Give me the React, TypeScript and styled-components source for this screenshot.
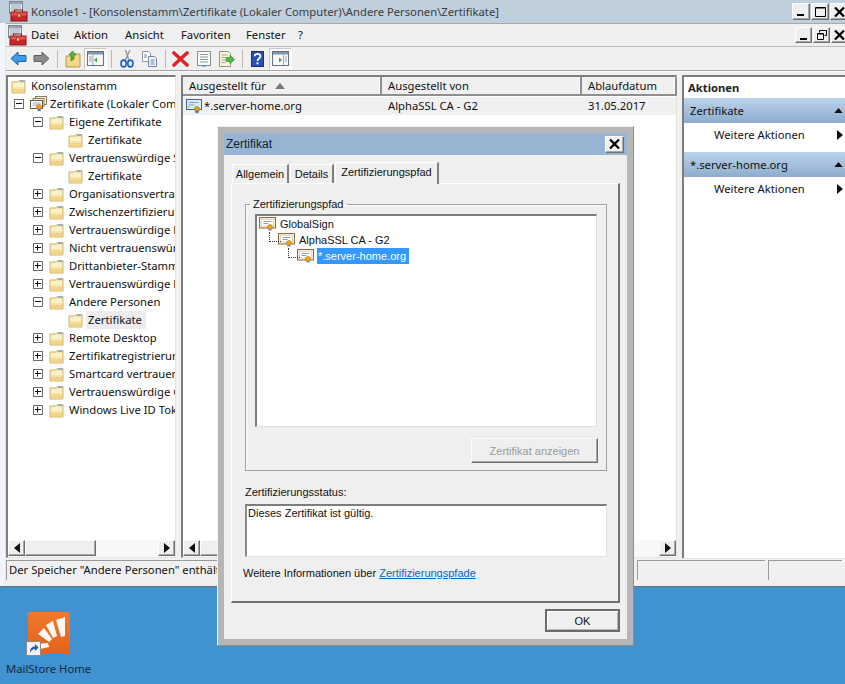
import React from "react";
import styled, { createGlobalStyle, css } from "styled-components";

const Global = createGlobalStyle`
  html, body { margin: 0; padding: 0; background: #4092d0; }
  * { box-sizing: border-box; }
  body { font-family: "Noto Sans", "DejaVu Sans", sans-serif; font-size: 11.25px; line-height: 14px; color: #111; }
`;

const raised = css`
  border: 1px solid;
  border-color: #fdfdfd #6f6f6f #6f6f6f #fdfdfd;
  box-shadow: inset -1px -1px 0 #a8a8a8;
  background: #efefef;
`;
const sunken = css`
  border: 1px solid;
  border-color: #7d7d7d #e4e4e4 #e4e4e4 #7d7d7d;
  border-top-width: 2px;
  border-left-width: 2px;
`;

const Page = styled.div`
  position: relative; width: 845px; height: 684px; overflow: hidden;
  display: flex; flex-direction: column; background: #4092d0;
`;
const Window = styled.div`
  height: 587px; flex: none; display: flex; flex-direction: column;
  background: #f1f5fa; border-bottom: 1px solid #6c6c6c;
`;
const TitleBar = styled.div`
  height: 23px; flex: none; display: flex; align-items: center; padding-left: 8px; gap: 2px;
  background: #bfcfdc; color: #3c3c3c;
`;
const TitleText = styled.span` flex: 1; white-space: nowrap; padding-top: 1px; `;
const CaptionGroup = styled.div` display: flex; gap: 1px; align-items: center; margin-right: -3px; `;
const CaptionBtn = styled.div<{ $w?: number; $h?: number }>`
  ${raised};
  width: ${p => p.$w ?? 18}px; height: ${p => p.$h ?? 17}px;
  display: flex; align-items: center; justify-content: center;
`;
const MdiArea = styled.div`
  flex: 1; display: flex; flex-direction: column; min-height: 0;
  border-top: 1px solid #a9a9a9; margin-left: 6px; background: #f0f0f0;
  box-shadow: -1px 0 0 #e6e6e6;
`;
const MenuBar = styled.div`
  height: 23px; flex: none; display: flex; align-items: center; padding-left: 1px;
  background: #f0f0f0; border-bottom: 1px solid #bdbdbd;
`;
const Menus = styled.div` flex: 1; display: flex; align-items: center; margin-left: 3px; `;
const MenuItem = styled.span<{ $w: number }>` width: ${p => p.$w}px; `;
const ToolBar = styled.div`
  height: 24px; flex: none; display: flex; align-items: center; padding-left: 1px;
  background: #f0f0f0; border-bottom: 1px solid #a5a5a5; box-shadow: 0 1px 0 #fafafa;
`;
const ToolBtn = styled.div<{ $on?: boolean }>`
  width: 23px; height: 22px; display: flex; align-items: center; justify-content: center;
  ${p => p.$on && css`border: 1px solid; border-color: #c9c9c9 #fff #fff #c9c9c9; background: #f7f7f7;`}
`;
const ToolSep = styled.div`
  width: 8px; height: 18px; display: flex; justify-content: center;
  &::after { content: ""; width: 1px; height: 100%; background: #b9b9b9; }
`;
const Panes = styled.div`
  flex: none; height: 483px; margin-top: 4px; display: flex; background: #f0f0f0;
`;
const TreePane = styled.div`
  width: 170px; flex: none; display: flex; flex-direction: column; background: #fff; overflow: hidden;
  ${sunken}; border-right: 1px solid #e4e4e4;
`;
const TreeBody = styled.div` flex: 1; overflow: hidden; `;
const Row = styled.div<{ $x: number }>`
  height: 18px; display: flex; align-items: center; padding-left: ${p => p.$x}px; white-space: nowrap;
`;
const Expander = styled.span`
  width: 10px; height: 10px; flex: none; margin-right: 6px; border: 1px solid #6d6d6d; background: #fff;
  display: flex; align-items: center; justify-content: center;
  svg { display: block; }
`;
const RowIcon = styled.span`
  width: 20px; flex: none; display: flex; align-items: center;
`;
const CurrentLabel = styled.span` background: #ececec; padding: 2px 4px 2px 2px; margin-left: -2px; `;
const ScrollBar = styled.div`
  height: 17px; flex: none; display: flex; align-items: stretch;
  background: repeating-conic-gradient(#f2f2f2 0 25%, #fff 0 50%) 0 0 / 2px 2px;
  padding-bottom: 1px;
`;
const ScrollBtn = styled.div`
  ${raised}; width: 17px; flex: none; display: flex; align-items: center; justify-content: center;
`;
const Thumb = styled.div<{ $w: number }>` ${raised}; width: ${p => p.$w}px; flex: none; `;
const Track = styled.div` flex: 1; `;
const ListPane = styled.div`
  width: 496px; flex: none; margin-left: 5px; display: flex; flex-direction: column; background: #fff;
  ${sunken}; border-right: 1px solid #e4e4e4;
`;
const ListHeader = styled.div` height: 19px; flex: none; display: flex; background: #f0f0f0; `;
const HeaderCell = styled.div<{ $w: number }>`
  width: ${p => p.$w}px; flex: none; display: flex; align-items: center; gap: 9px; padding-left: 6px;
  border-bottom: 2px solid #8f8f8f; border-right: 2px solid #8f8f8f; box-shadow: inset -1px 0 0 #fff;
  white-space: nowrap;
`;
const ListRow = styled.div` height: 18px; flex: none; margin-top: 1px; display: flex; align-items: center; background: #f0f0f0; `;
const ListCell = styled.div<{ $w: number }>`
  width: ${p => p.$w}px; flex: none; display: flex; align-items: center; padding-left: 6px; white-space: nowrap;
`;
const ListFirst = styled(ListCell)` padding-left: 3px; gap: 1px; `;
const ListBody = styled.div` flex: 1; `;
const ActionPane = styled.div`
  flex: 1; margin-left: 5px; background: #fff; display: flex; flex-direction: column;
  border-left: 2px solid #7d7d7d; border-top: 2px solid #7d7d7d;
  box-shadow: 0 1px 0 #e4e4e4;
`;
const ActionHead = styled.div` height: 21px; flex: none; display: flex; align-items: center; padding-left: 4px; font-weight: bold; color: #222; `;
const ActionBand = styled.div`
  height: 25px; flex: none; display: flex; align-items: center; justify-content: space-between; padding: 0 2px 0 6px;
  background: linear-gradient(#bcd3ea, #8dacce);
`;
const ActionLine = styled.div`
  height: 24px; flex: none; display: flex; align-items: center; justify-content: space-between; padding: 0 2px 0 30px;
  margin-bottom: 5px;
`;
const StatusBar = styled.div`
  height: 20px; margin-top: 2px; flex: none; display: flex; background: #f0f0f0;
`;
const StatusCell = styled.div<{ $w?: number }>`
  ${p => (p.$w ? `width: ${p.$w}px; flex: none;` : "flex: 1;")}
  border-top: 1px solid #9a9a9a; border-left: 1px solid #9a9a9a; margin-right: 3px; padding: 2px 0 0 2px;
  white-space: nowrap; overflow: hidden;
`;
const Desktop = styled.div` flex: 1; padding: 25px 0 0 6px; `;
const Shortcut = styled.div` position: relative; width: 86px; display: flex; flex-direction: column; `;
const ShortcutIcon = styled.div` width: 42px; height: 42px; margin-left: 22px; `;
const Arrow = styled.div`
  position: absolute; left: 20px; top: 29px; width: 15px; height: 15px; background: #f4f4f4; border: 1px solid #8a8a8a;
  display: flex; align-items: center; justify-content: center;
`;
const ShortcutLabel = styled.div` margin-top: 8px; white-space: nowrap; color: #14283c; `;

const Dialog = styled.div`
  position: absolute; left: 217px; top: 126px; width: 417px; height: 520px; padding: 6px;
  background: #b6b6b6; border-top: 1px solid #f2f2f2; border-left: 1px solid #f2f2f2; border-bottom: 1px solid #8e8e8e; border-right: 1px solid #8e8e8e;
  display: flex; flex-direction: column; font-family: "Liberation Sans", Arial, sans-serif; font-size: 11px;
`;
const DialogBody = styled.div` flex: 1; background: #efefef; display: flex; flex-direction: column; `;
const DialogTitle = styled.div`
  height: 22px; flex: none; background: #98b4d3; display: flex; align-items: center; justify-content: space-between;
  padding: 0 3px 0 2px; color: #14202c; font-size: 12px;
`;
const DialogClose = styled(CaptionBtn)` width: 19px; height: 17px; `;
const Tabs = styled.div` display: flex; align-items: flex-end; height: 21px; margin: 7px 0 0 8px; position: relative; z-index: 1; `;
const Tab = styled.div<{ $active?: boolean; $w: number }>`
  width: ${p => p.$w}px; display: flex; align-items: center; justify-content: center;
  height: ${p => (p.$active ? 22 : 19)}px; margin-right: 1px;
  border-top: 1px solid #fff; border-left: 1px solid #fff; border-right: 2px solid #7f7f7f; background: #efefef;
  ${p => p.$active && css`margin-bottom: -1px; padding-bottom: 3px;`}
`;
const TabPanel = styled.div`
  height: 420px; flex: none; margin: 0 7px; padding: 0 13px;
  border-top: 1px solid #fff; border-left: 1px solid #fff; border-right: 2px solid #6f6f6f; border-bottom: 2px solid #6f6f6f;
  display: flex; flex-direction: column;
`;
const Group = styled.fieldset`
  margin: 13px 0 0; padding: 3px 9px 6px; border: 1px solid #a0a0a0; width: 362px;
  box-shadow: inset 1px 1px 0 #fff; display: flex; flex-direction: column; height: 274px;
`;
const GroupTitle = styled.legend` padding: 0 3px; margin-left: -5px; line-height: 14px; `;
const PathTree = styled.div`
  height: 213px; flex: none; background: #fff;
  ${sunken}; border-bottom-color: #e0e0e0; border-right-color: #e0e0e0;
`;
const PathRow = styled.div<{ $level: number }>`
  height: 16px; display: flex; align-items: center; gap: 3px; position: relative; white-space: nowrap;
  padding-left: ${p => 2 + p.$level * 19}px;
  ${p => p.$level > 0 && css`
    &::before {
      content: ""; position: absolute; left: ${-7 + p.$level * 19}px; top: 0; width: 11px; height: 9px;
      border-left: 1px dotted #333; border-bottom: 1px dotted #333;
    }
  `}
`;
const Selected = styled.span` background: #3399ff; color: #fff; padding: 1px 3px 1px 1px; margin-left: -1px; `;
const DisabledBtn = styled.div`
  ${raised}; align-self: flex-end; width: 127px; height: 25px; margin-top: 11px; color: #9a9a9a; margin-right: -1px;
  display: flex; align-items: center; justify-content: center;
`;
const StatusLabel = styled.div` margin-top: 14px; height: 14px; `;
const StatusBox = styled.div`
  margin-top: 5px; width: 362px; height: 53px; background: #fff; padding: 0 0 0 1px;
  border-top: 2px solid #7d7d7d; border-left: 2px solid #8a8a8a; border-right: 1px solid #e4e4e4; border-bottom: 1px solid #e4e4e4;
`;
const MoreInfo = styled.div` margin: 9px 0 0 -2px; height: 14px; `;
const Link = styled.a` color: #0066cc; text-decoration: underline; `;
const DialogFooter = styled.div` display: flex; justify-content: flex-end; padding: 6px 7px 0 0; `;
const OkButton = styled.div`
  width: 75px; height: 23px; background: #efefef; display: flex; align-items: center; justify-content: center;
  border: 2px solid #6c6c6c; box-shadow: inset 1px 1px 0 #fff, inset -1px -1px 0 #b5b5b5;
`;

const Toolbox = () => (
  <svg width="21" height="21" viewBox="0 0 21 21">
    <rect x="1.5" y="0.5" width="13" height="12" fill="#e9edf2" stroke="#7b8794" />
    <rect x="2" y="1" width="12" height="2.5" fill="#8ea6bf" />
    <path d="M3 5h10M3 7h10M3 9h7" stroke="#9aa4ae" />
    <rect x="6.5" y="9" width="8" height="3" fill="none" stroke="#7a1a1a" />
    <rect x="3" y="11" width="16" height="9" fill="#c9262c" stroke="#7e1418" />
    <rect x="3.5" y="11.5" width="15" height="3" fill="#e6504f" />
    <rect x="9.5" y="13" width="3" height="3" fill="#f0d36a" stroke="#7e1418" strokeWidth=".5" />
  </svg>
);
const Folder = () => (
  <svg width="15" height="15" viewBox="0 0 15 15">
    <path d="M1 3V14H14V1.5H8L6.8 3Z" fill="#f8e3a6" stroke="#d3b56c" />
    <path d="M2 4H13V8H2Z" fill="#fcf1cd" />
    <path d="M9 1.6H13.6V3H9Z" fill="#7fb2de" />
    <path d="M2 10H13V13.5H2Z" fill="#f2d58a" />
  </svg>
);
const StoreIcon = () => (
  <svg width="17" height="16" viewBox="0 0 17 16">
    <rect x="5.5" y=".5" width="11" height="8" fill="#f5efdd" stroke="#8b7d5c" />
    <rect x="3" y="2.5" width="11" height="8" fill="#f7f2e4" stroke="#8b7d5c" />
    <rect x=".5" y="4.5" width="12" height="8" fill="#fff" stroke="#6b5f45" />
    <path d="M2.5 7h8M2.5 9h5" stroke="#9aa7b5" />
    <circle cx="9" cy="11" r="2.6" fill="#e8a21c" stroke="#b4750d" strokeWidth=".6" />
    <path d="M7.5 13v2.5L9 14.5l1.5 1V13" fill="#2e6fc0" />
  </svg>
);
const ListCert = () => (
  <svg width="17" height="16" viewBox="0 0 17 16">
    <rect x=".5" y="1.5" width="15" height="10" fill="#dcecf6" stroke="#46668a" />
    <path d="M2.5 4.5h10M2.5 7h6" stroke="#7fa6c5" />
    <circle cx="2.5" cy="9" r="1" fill="#d6c24a" />
    <circle cx="11" cy="11" r="2.6" fill="#c8a431" stroke="#8f7416" strokeWidth=".5" />
    <path d="M9.5 13v2.6L11 14.6l1.5 1V13" fill="#2e6fc0" />
  </svg>
);
const Cert = () => (
  <svg width="18" height="14" viewBox="0 0 18 14">
    <rect x=".5" y=".5" width="16" height="10.5" fill="#f4ead6" stroke="#8a6a3c" />
    <rect x="2.5" y="2.5" width="12" height="6.5" fill="#fff" stroke="#d9c9aa" strokeWidth=".6" />
    <path d="M4.5 4.5h8M4.5 6.5h5" stroke="#8ba0b8" />
    <circle cx="11" cy="10" r="2.5" fill="#eea41a" stroke="#b9760b" strokeWidth=".6" />
    <path d="M9.6 12v2l1.4-1 1.4 1v-2" fill="#4a86c8" />
  </svg>
);
const Plus = () => (
  <svg width="8" height="8" viewBox="0 0 8 8"><path d="M1 3.5h6M3.5 1v5.5" stroke="#111" /></svg>
);
const Minus = () => (
  <svg width="8" height="8" viewBox="0 0 8 8"><path d="M1 3.5h6" stroke="#111" /></svg>
);
const Tri = ({ dir, size = 5, color = "#111" }: { dir: "l" | "r" | "u"; size?: number; color?: string }) => {
  const p = dir === "l" ? "6,0 6,10 0,5" : dir === "r" ? "0,0 0,10 6,5" : "0,6 10,6 5,0";
  const w = dir === "u" ? 10 : 6;
  const h = dir === "u" ? 6 : 10;
  return (
    <svg width={(w * size) / 5} height={(h * size) / 5} viewBox={`0 0 ${w} ${h}`}>
      <polygon points={p} fill={color} />
    </svg>
  );
};
const Arrowhead = ({ left, fill, stroke }: { left?: boolean; fill: string; stroke: string }) => (
  <svg width="17" height="15" viewBox="0 0 17 15">
    <path d={left ? "M1 7.5L8 1V4.5H16V10.5H8V14Z" : "M16 7.5L9 1V4.5H1V10.5H9V14Z"} fill={fill} stroke={stroke} />
  </svg>
);
const UpFolder = () => (
  <svg width="16" height="18" viewBox="0 0 16 18">
    <path d="M1 6V17H15V4H8L6.5 6Z" fill="#f3d888" stroke="#b99a4d" />
    <path d="M6 11V5H3.8L7.5 1l3.7 4H9v4z" fill="#5bb13a" stroke="#2f7f1d" strokeWidth=".7" />
  </svg>
);
const PaneIcon = ({ right }: { right?: boolean }) => (
  <svg width="17" height="15" viewBox="0 0 17 15">
    <rect x=".5" y=".5" width="16" height="14" fill="#f7f7f7" stroke="#66727e" />
    <rect x="1" y="1" width="15" height="2.5" fill="#7d95ad" />
    <path d={right ? "M11.5 4v10" : "M6 4v10"} stroke="#9aa4ae" />
    <polygon points={right ? "7,6.5 7,11.5 10,9" : "10,6.5 10,11.5 7,9"} fill="#3ea74a" />
    <path d={right ? "M13 6h2M13 8h2M13 10h2" : "M2 6h3M2 8h3M2 10h3"} stroke="#9aa4ae" />
  </svg>
);
const Cut = () => (
  <svg width="14" height="19" viewBox="0 0 14 19">
    <path d="M10 1L5 12M5.5 1L9 12" stroke="#8a96a3" strokeWidth="1.3" />
    <ellipse cx="3.6" cy="14.5" rx="2.6" ry="3.4" fill="none" stroke="#1e62c8" strokeWidth="1.6" />
    <ellipse cx="10.4" cy="14.5" rx="2.6" ry="3.4" fill="none" stroke="#1e62c8" strokeWidth="1.6" />
  </svg>
);
const Copy = () => (
  <svg width="17" height="16" viewBox="0 0 17 16">
    <path d="M1.5.5h6l2 2v8h-8z" fill="#fff" stroke="#8c97a3" />
    <path d="M7.5 5.5h6l2 2v8h-8z" fill="#eef3fa" stroke="#6f88a8" />
    <path d="M9.5 9h4M9.5 11h4M9.5 13h4M3 4h3M3 6h3" stroke="#6f88a8" />
  </svg>
);
const DeleteX = () => (
  <svg width="17" height="16" viewBox="0 0 17 16">
    <path d="M2 2L15 14M15 2L2 14" stroke="#d8262a" strokeWidth="3.6" strokeLinecap="round" />
  </svg>
);
const Props = () => (
  <svg width="16" height="16" viewBox="0 0 16 16">
    <rect x="1.5" y=".5" width="13" height="14" fill="#fbfbf6" stroke="#8a8f94" />
    <path d="M4 3.5h8M4 6h8M4 8.5h8M4 11h8" stroke="#8c9aa8" />
    <rect x="6" y="14" width="4" height="1.6" fill="#3aa0e0" />
  </svg>
);
const ExportI = () => (
  <svg width="17" height="16" viewBox="0 0 17 16">
    <path d="M1.5.5h9l2 2v13h-11z" fill="#fbf4d8" stroke="#9b9474" />
    <path d="M3.5 4h6M3.5 6.5h4M3.5 9h4M3.5 11.5h4" stroke="#9aa" />
    <path d="M8 6.5h4V4l4.5 4.5L12 13v-2.5H8z" fill="#54b948" stroke="#2f8a2c" strokeWidth=".6" />
  </svg>
);
const Help = () => (
  <svg width="13" height="16" viewBox="0 0 13 16">
    <rect width="13" height="16" fill="#2c4fb0" />
    <rect x=".5" y=".5" width="12" height="15" fill="none" stroke="#1b2f7c" />
    <path d="M3.6 5.2C3.8 2.2 9.4 2 9.4 5.2 9.4 7.6 6.5 7.5 6.5 10" fill="none" stroke="#fff" strokeWidth="1.8" />
    <rect x="5.5" y="11.3" width="2" height="2" fill="#fff" />
  </svg>
);
const MailStore = () => (
  <svg width="42" height="42" viewBox="0 0 42 42">
    <defs>
      <linearGradient id="ms" x1="0" y1="0" x2="0" y2="1">
        <stop offset="0" stopColor="#f07a2c" />
        <stop offset="1" stopColor="#e5611a" />
      </linearGradient>
    </defs>
    <rect width="42" height="42" rx="3" fill="url(#ms)" />
    <polygon points="28,8 37,5 37,24 33,25" fill="#fff" opacity=".95" />
    <polygon points="18,13 25,9 29,24 25,26" fill="#fff" opacity=".95" />
    <polygon points="10,22 16,16 24,27 21,30" fill="#fff" opacity=".95" />
    <polygon points="9,32 20,31 21,35 12,37" fill="#fff" opacity=".95" />
  </svg>
);
const CloseGlyph = () => (
  <svg width="11" height="10" viewBox="0 0 11 10"><path d="M1 .5L10 9.5M10 .5L1 9.5" stroke="#000" strokeWidth="2.2" /></svg>
);
const MinGlyph = () => (
  <svg width="10" height="11" viewBox="0 0 10 11"><rect x="1" y="8" width="7" height="2" fill="#000" /></svg>
);
const MaxGlyph = () => (
  <svg width="11" height="11" viewBox="0 0 11 11"><path d="M.5 1.5h10v9H.5z" fill="none" stroke="#000" /><rect x="1" y="1" width="9" height="1.5" fill="#000" /></svg>
);
const RestoreGlyph = () => (
  <svg width="10" height="10" viewBox="0 0 10 10">
    <path d="M2.5 2.5V.5h7v5h-2" fill="none" stroke="#000" />
    <path d="M.5 3.5h6v6h-6z" fill="none" stroke="#000" />
    <path d="M1 4h5" stroke="#000" />
  </svg>
);

type Node = { label: string; x: number; exp?: "+" | "-"; kind?: "store"; current?: boolean };
const nodes: Node[] = [
  { label: "Konsolenstamm", x: 3 },
  { label: "Zertifikate (Lokaler Computer)", x: 6, exp: "-", kind: "store" },
  { label: "Eigene Zertifikate", x: 25, exp: "-" },
  { label: "Zertifikate", x: 60 },
  { label: "Vertrauenswürdige Stammzertifizierungsstellen", x: 25, exp: "-" },
  { label: "Zertifikate", x: 60 },
  { label: "Organisationsvertrauen", x: 25, exp: "+" },
  { label: "Zwischenzertifizierungsstellen", x: 25, exp: "+" },
  { label: "Vertrauenswürdige Herausgeber", x: 25, exp: "+" },
  { label: "Nicht vertrauenswürdige Zertifikate", x: 25, exp: "+" },
  { label: "Drittanbieter-Stammzertifizierungsstellen", x: 25, exp: "+" },
  { label: "Vertrauenswürdige Personen", x: 25, exp: "+" },
  { label: "Andere Personen", x: 25, exp: "-" },
  { label: "Zertifikate", x: 60, current: true },
  { label: "Remote Desktop", x: 25, exp: "+" },
  { label: "Zertifikatregistrierungsanforderungen", x: 25, exp: "+" },
  { label: "Smartcard vertrauenswürdige Stämme", x: 25, exp: "+" },
  { label: "Vertrauenswürdige Geräte", x: 25, exp: "+" },
  { label: "Windows Live ID Token Issuer", x: 25, exp: "+" },
];

const Bar = ({ thumb }: { thumb: number }) => (
  <ScrollBar>
    <ScrollBtn><Tri dir="l" /></ScrollBtn>
    <Thumb $w={thumb} />
    <Track />
    <ScrollBtn><Tri dir="r" /></ScrollBtn>
  </ScrollBar>
);

export default function App() {
  return (
    <Page>
      <Global />
      <Window>
        <TitleBar>
          <Toolbox />
          <TitleText>Konsole1 - [Konsolenstamm\Zertifikate (Lokaler Computer)\Andere Personen\Zertifikate]</TitleText>
          <CaptionGroup>
            <CaptionBtn><MinGlyph /></CaptionBtn>
            <CaptionBtn><MaxGlyph /></CaptionBtn>
            <CaptionBtn><CloseGlyph /></CaptionBtn>
          </CaptionGroup>
        </TitleBar>
        <MdiArea>
          <MenuBar>
            <Toolbox />
            <Menus>
              <MenuItem $w={43}>Datei</MenuItem>
              <MenuItem $w={51}>Aktion</MenuItem>
              <MenuItem $w={56}>Ansicht</MenuItem>
              <MenuItem $w={65}>Favoriten</MenuItem>
              <MenuItem $w={52}>Fenster</MenuItem>
              <MenuItem $w={20}>?</MenuItem>
            </Menus>
            <CaptionGroup>
              <CaptionBtn $w={17} $h={16}><MinGlyph /></CaptionBtn>
              <CaptionBtn $w={17} $h={16}><RestoreGlyph /></CaptionBtn>
              <CaptionBtn $w={17} $h={16}><CloseGlyph /></CaptionBtn>
            </CaptionGroup>
          </MenuBar>
          <ToolBar>
            <ToolBtn><Arrowhead left fill="#3f9be6" stroke="#1c5ea8" /></ToolBtn>
            <ToolBtn><Arrowhead fill="#8c8c8c" stroke="#5f5f5f" /></ToolBtn>
            <ToolSep />
            <ToolBtn><UpFolder /></ToolBtn>
            <ToolBtn $on><PaneIcon /></ToolBtn>
            <ToolSep />
            <ToolBtn><Cut /></ToolBtn>
            <ToolBtn><Copy /></ToolBtn>
            <ToolSep />
            <ToolBtn><DeleteX /></ToolBtn>
            <ToolBtn><Props /></ToolBtn>
            <ToolBtn><ExportI /></ToolBtn>
            <ToolSep />
            <ToolBtn><Help /></ToolBtn>
            <ToolBtn $on><PaneIcon right /></ToolBtn>
          </ToolBar>
          <Panes>
            <TreePane>
              <TreeBody>
                {nodes.map((n, i) => (
                  <Row key={i} $x={n.x}>
                    {n.exp && <Expander>{n.exp === "+" ? <Plus /> : <Minus />}</Expander>}
                    <RowIcon>{n.kind ? <StoreIcon /> : <Folder />}</RowIcon>
                    {n.current ? <CurrentLabel>{n.label}</CurrentLabel> : <span>{n.label}</span>}
                  </Row>
                ))}
              </TreeBody>
              <Bar thumb={71} />
            </TreePane>
            <ListPane>
              <ListHeader>
                <HeaderCell $w={199}>Ausgestellt für <Tri dir="u" size={5} color="#777" /></HeaderCell>
                <HeaderCell $w={200}>Ausgestellt von</HeaderCell>
                <HeaderCell $w={95}>Ablaufdatum</HeaderCell>
              </ListHeader>
              <ListRow>
                <ListFirst $w={199}><ListCert />*.server-home.org</ListFirst>
                <ListCell $w={200}>AlphaSSL CA - G2</ListCell>
                <ListCell $w={95}>31.05.2017</ListCell>
              </ListRow>
              <ListBody />
              <Bar thumb={60} />
            </ListPane>
            <ActionPane>
              <ActionHead>Aktionen</ActionHead>
              <ActionBand>Zertifikate <Tri dir="u" size={4.5} /></ActionBand>
              <ActionLine>Weitere Aktionen <Tri dir="r" size={5} /></ActionLine>
              <ActionBand>*.server-home.org <Tri dir="u" size={4.5} /></ActionBand>
              <ActionLine>Weitere Aktionen <Tri dir="r" size={5} /></ActionLine>
            </ActionPane>
          </Panes>
          <StatusBar>
            <StatusCell $w={628}>Der Speicher "Andere Personen" enthält 1 Zertifikat.</StatusCell>
            <StatusCell $w={128} />
            <StatusCell />
          </StatusBar>
        </MdiArea>
      </Window>
      <Desktop>
        <Shortcut>
          <ShortcutIcon><MailStore /></ShortcutIcon>
          <Arrow>
            <svg width="11" height="11" viewBox="0 0 11 11">
              <path d="M2 10C2 5 4 3.5 7 3.5V1l3.5 3.5L7 8V6C5 6 3.5 7 2 10Z" fill="#1f5fa8" />
            </svg>
          </Arrow>
          <ShortcutLabel>MailStore Home</ShortcutLabel>
        </Shortcut>
      </Desktop>
      <Dialog>
        <DialogBody>
          <DialogTitle>
            <span>Zertifikat</span>
            <DialogClose><CloseGlyph /></DialogClose>
          </DialogTitle>
          <Tabs>
            <Tab $w={57}>Allgemein</Tab>
            <Tab $w={44}>Details</Tab>
            <Tab $active $w={104}>Zertifizierungspfad</Tab>
          </Tabs>
          <TabPanel>
            <Group>
              <GroupTitle>Zertifizierungspfad</GroupTitle>
              <PathTree>
                <PathRow $level={0}><Cert />GlobalSign</PathRow>
                <PathRow $level={1}><Cert />AlphaSSL CA - G2</PathRow>
                <PathRow $level={2}><Cert /><Selected>*.server-home.org</Selected></PathRow>
              </PathTree>
              <DisabledBtn>Zertifikat anzeigen</DisabledBtn>
            </Group>
            <StatusLabel>Zertifizierungsstatus:</StatusLabel>
            <StatusBox>Dieses Zertifikat ist gültig.</StatusBox>
            <MoreInfo>Weitere Informationen über <Link>Zertifizierungspfade</Link></MoreInfo>
          </TabPanel>
          <DialogFooter><OkButton>OK</OkButton></DialogFooter>
        </DialogBody>
      </Dialog>
    </Page>
  );
}
